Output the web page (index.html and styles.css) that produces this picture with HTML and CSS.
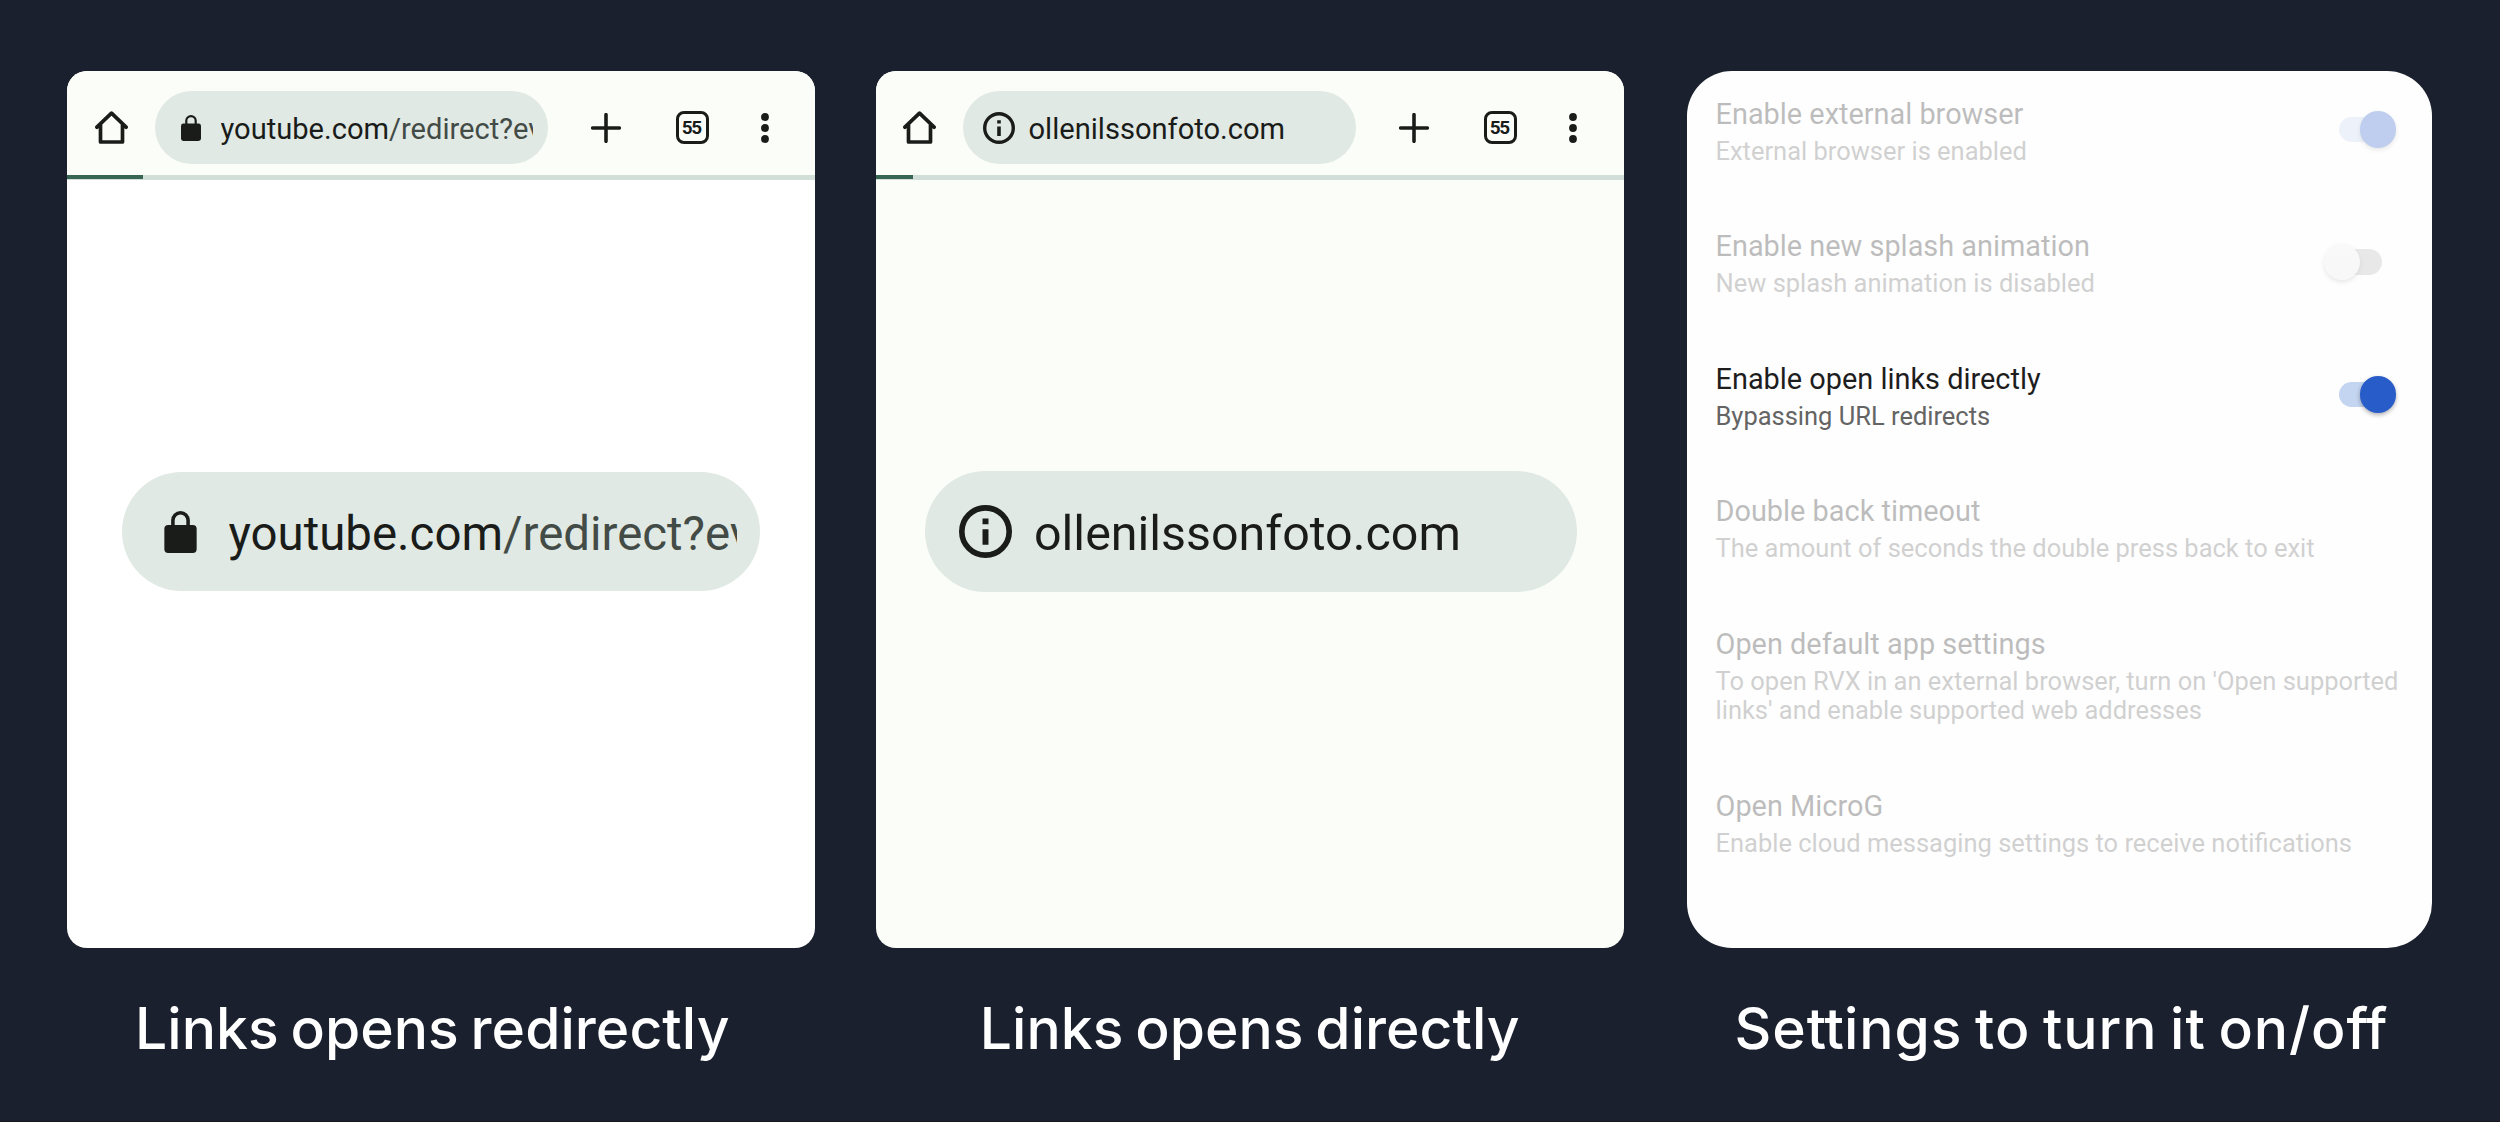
FILE: index.html
```html
<!DOCTYPE html>
<html lang="en">
<head>
<meta charset="utf-8">
<title>Open links directly</title>
<link rel="stylesheet" href="styles.css">
</head>
<body>
<svg class="defs" width="0" height="0" aria-hidden="true">
  <symbol id="home" viewBox="0 0 33 33"><path d="M1.9 16.2 16.5 2.2 31.1 16.2M5.5 13.5V31H27.5V13.5" fill="none" stroke="#1a1c1a" stroke-width="3.7" stroke-linejoin="round" stroke-linecap="round"/></symbol>
  <symbol id="lock" viewBox="0 0 20 26"><rect y="8.6" width="20" height="17.4" rx="2.4" fill="#1a1c1a"/><path d="M5.3 9.5V5.8a4.7 4.7 0 0 1 9.4 0v3.7" fill="none" stroke="#1a1c1a" stroke-width="2.2"/></symbol>
  <symbol id="info" viewBox="0 0 32 32"><circle cx="16" cy="16" r="14.3" fill="none" stroke="#1a1c1a" stroke-width="3.4"/><path d="M14.2 8.2h3.6v3.4h-3.6zM14.2 14.6h3.6v9.4h-3.6z" fill="#1a1c1a"/></symbol>
  <symbol id="plus" viewBox="0 0 30 30"><path d="M15 1.7V28.3M1.7 15H28.3" stroke="#1a1c1a" stroke-width="3.6" stroke-linecap="round"/></symbol>
  <symbol id="dots" viewBox="0 0 8 30"><circle cx="4" cy="4" r="3.9" fill="#1a1c1a"/><circle cx="4" cy="15" r="3.9" fill="#1a1c1a"/><circle cx="4" cy="26" r="3.9" fill="#1a1c1a"/></symbol>
</svg>
<main class="board">
  <figure class="column">
    <section class="card browser">
      <header class="toolbar">
        <svg class="home"><use href="#home"/></svg>
        <div class="pill"><svg class="lock"><use href="#lock"/></svg><span class="url">youtube.com<span class="path">/redirect?ev</span></span></div>
        <svg class="plus"><use href="#plus"/></svg>
        <span class="tabs">55</span>
        <svg class="dots"><use href="#dots"/></svg>
      </header>
      <div class="progress"><div class="bar"></div></div>
      <div class="pill big secure"><svg class="lock"><use href="#lock"/></svg><span class="url">youtube.com<span class="path">/redirect?ev</span></span></div>
    </section>
    <figcaption class="redirect-caption">Links opens redirectly</figcaption>
  </figure>
  <figure class="column">
    <section class="card browser tinted">
      <header class="toolbar">
        <svg class="home"><use href="#home"/></svg>
        <div class="pill open"><svg class="info"><use href="#info"/></svg><span class="url">ollenilssonfoto.com</span></div>
        <svg class="plus"><use href="#plus"/></svg>
        <span class="tabs">55</span>
        <svg class="dots"><use href="#dots"/></svg>
      </header>
      <div class="progress"><div class="bar short"></div></div>
      <div class="pill big direct"><svg class="info"><use href="#info"/></svg><span class="url">ollenilssonfoto.com</span></div>
    </section>
    <figcaption>Links opens directly</figcaption>
  </figure>
  <figure class="column narrow">
    <section class="card settings">
      <div class="row faded"><div><h2>Enable external browser</h2><p>External browser is enabled</p></div><i class="switch on"></i></div>
      <div class="row faded"><div><h2>Enable new splash animation</h2><p>New splash animation is disabled</p></div><i class="switch off"></i></div>
      <div class="row"><div><h2>Enable open links directly</h2><p>Bypassing URL redirects</p></div><i class="switch on"></i></div>
      <div class="row faded"><div><h2>Double back timeout</h2><p>The amount of seconds the double press back to exit</p></div></div>
      <div class="row faded"><div><h2>Open default app settings</h2><p>To open RVX in an external browser, turn on 'Open supported<br>links' and enable supported web addresses</p></div></div>
      <div class="row faded"><div><h2>Open MicroG</h2><p>Enable cloud messaging settings to receive notifications</p></div></div>
    </section>
    <figcaption class="settings-caption">Se<span class="joined">tt</span>ings to turn it on/o<span class="joined">ff</span></figcaption>
  </figure>
</main>
</body>
</html>
```
FILE: styles.css
```css
* { box-sizing: border-box; margin: 0; padding: 0; }
body { background: #1b202e; font-family: Roboto, sans-serif; color: #1a1c1a; overflow: hidden; }
.defs { display: block; }
svg { flex: none; }
.board { display: grid; grid-template-columns: 748.5px 748.5px 747px; column-gap: 60.5px; height: 1122px; padding: 71px 0 0 66.5px; border-bottom: 1px solid #19151d; }
.narrow { padding-left: 2px; }
.card { height: 877px; overflow: hidden; background: #fff; border-radius: 20px; }
.tinted { background: #fbfef8; }
.toolbar { display: flex; align-items: center; height: 104px; padding: 9px 0 0 28.5px; background: #fbfef8; }
.tinted .toolbar { padding-left: 27.5px; }
.toolbar .home { width: 33px; height: 33px; }
.pill { display: flex; align-items: center; background: #e1e9e4; border-radius: 80px; }
.toolbar .pill { width: 393px; height: 73px; margin-left: 26.5px; padding-left: 26.5px; }
.toolbar .pill.open { padding-left: 20px; }
.url { font-size: 29.1px; line-height: 36px; white-space: nowrap; overflow: hidden; }
.path { color: #434b46; }
.toolbar .url { width: 312.5px; margin: 3px 0 0 19.5px; }
.toolbar .open .url { margin-left: 14px; }
.toolbar .lock { width: 20px; height: 26px; }
.toolbar .info { width: 32px; height: 32px; }
.plus { width: 30px; height: 30px; margin-left: 43px; }
.tabs { width: 33px; height: 33px; margin-left: 55px; border: 3.5px solid #1a1c1a; border-radius: 8px; font-size: 19px; font-weight: 700; line-height: 27px; text-align: center; text-indent: -1.5px; letter-spacing: -1.5px; }
.dots { width: 8px; height: 30px; margin-left: 52.5px; }
.progress { height: 5px; background: #d2dfd8; }
.bar { width: 76px; height: 4px; background: #386655; }
.bar.short { width: 37.5px; }
.big .url { font-size: 47.4px; line-height: 60px; }
.secure { width: 638px; height: 119px; margin: 292px 0 0 55.5px; padding-left: 41.5px; }
.secure .lock { width: 33px; height: 42px; }
.secure .url { width: 508px; margin: 4px 0 0 32px; }
.direct { width: 652px; height: 121px; margin: 290.5px 0 0 49px; padding-left: 34px; }
.direct .info { width: 53px; height: 53px; }
.direct .url { font-size: 48.4px; margin: 6px 0 0 22.5px; }
.settings { display: flex; flex-direction: column; gap: 63px; padding: 25.5px 0 0 29px; border-radius: 45px; background: #fefefe; }
.row { display: flex; justify-content: space-between; }
.row.faded { opacity: .29; }
h2 { font-size: 28.9px; line-height: 34px; font-weight: 400; color: #1d1d1d; white-space: nowrap; }
p { margin-top: 6px; font-size: 25.47px; line-height: 29.5px; color: #646464; white-space: nowrap; }
.switch { display: block; position: relative; width: 43px; height: 25.5px; margin: 20px 50px 0 0; border-radius: 13px; background: #c4d5f1; }
.switch::after { content: ""; position: absolute; top: -5.5px; left: 21px; width: 36.5px; height: 36.5px; border-radius: 50%; background: #285cc9; box-shadow: 0 2px 4px rgba(0, 0, 0, .3); }
.switch.off { background: #b4b4b4; }
.switch.off::after { left: -15px; background: #ececec; }
figcaption { margin-top: 46px; color: #fff; font: 500 57px/70px Inter, sans-serif; letter-spacing: .05px; word-spacing: -3.5px; text-align: center; white-space: nowrap; }
.redirect-caption { padding-right: 17px; }
.settings-caption { padding-left: 4px; letter-spacing: .95px; }
.joined { letter-spacing: 0; }
```
